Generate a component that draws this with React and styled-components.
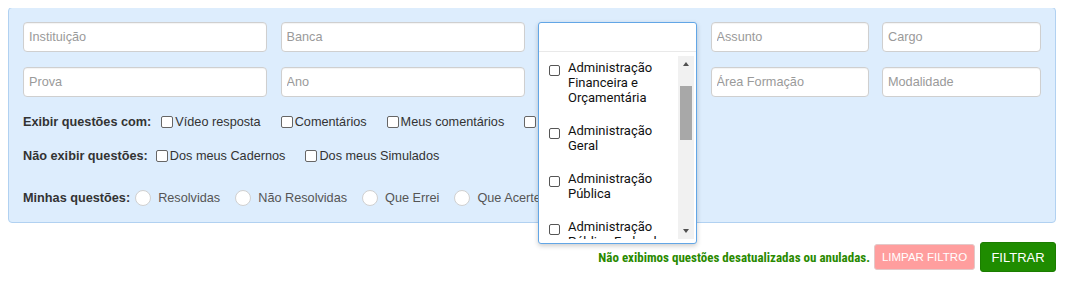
import React from "react";
import styled, { createGlobalStyle } from "styled-components";

const GlobalStyle = createGlobalStyle`
  body {
    margin: 8px;
    background: #ffffff;
    font-family: "Liberation Sans", Arial, sans-serif;
  }
`;

const topFields = ["Instituição", "Banca"];
const sideFields = ["Assunto", "Cargo"];
const bottomFields = ["Prova", "Ano"];
const bottomSideFields = ["Área Formação", "Modalidade"];

const exibirCom = ["Vídeo resposta", "Comentários", "Meus comentários", "Minhas anotações"];
const naoExibir = ["Dos meus Cadernos", "Dos meus Simulados"];
const minhas = ["Resolvidas", "Não Resolvidas", "Que Errei", "Que Acertei"];

const disciplinas = [
  "Administração Financeira e Orçamentária",
  "Administração Geral",
  "Administração Pública",
  "Administração Pública Federal",
];

function App() {
  return (
    <>
      <GlobalStyle />
      <Panel>
        <FieldGrid>
          {topFields.map((f) => (
            <TextInput key={f} placeholder={f} />
          ))}
          <DropCell>
            <Dropdown>
              <DropHeader />
              <DropBody>
                <DropList>
                  {disciplinas.map((d) => (
                    <DropItem key={d}>
                      <SmallBox type="checkbox" />
                      <DropText>{d}</DropText>
                    </DropItem>
                  ))}
                </DropList>
                <ScrollBar>
                  <ScrollArrow>
                    <ArrowUp />
                  </ScrollArrow>
                  <ScrollTrack>
                    <ScrollThumb />
                  </ScrollTrack>
                  <ScrollArrow>
                    <ArrowDown />
                  </ScrollArrow>
                </ScrollBar>
              </DropBody>
            </Dropdown>
          </DropCell>
          {sideFields.map((f) => (
            <TextInput key={f} placeholder={f} />
          ))}
          {bottomFields.map((f) => (
            <TextInput key={f} placeholder={f} />
          ))}
          {bottomSideFields.map((f) => (
            <TextInput key={f} placeholder={f} />
          ))}
        </FieldGrid>

        <OptionRow $top={15}>
          <RowLabel>Exibir questões com:</RowLabel>
          <Options $first={10}>
            {exibirCom.map((o) => (
              <Check key={o}>
                <Box type="checkbox" />
                {o}
              </Check>
            ))}
          </Options>
        </OptionRow>

        <OptionRow $top={14}>
          <RowLabel>Não exibir questões:</RowLabel>
          <Options $first={8}>
            {naoExibir.map((o) => (
              <Check key={o}>
                <Box type="checkbox" />
                {o}
              </Check>
            ))}
          </Options>
        </OptionRow>

        <OptionRow $top={22}>
          <RowLabel>Minhas questões:</RowLabel>
          <Options $first={5} $gap={15}>
            {minhas.map((o) => (
              <Radio key={o}>
                <Circle type="radio" name="minhas" />
                {o}
              </Radio>
            ))}
          </Options>
        </OptionRow>
      </Panel>

      <Footer>
        <Note>Não exibimos questões desatualizadas ou anuladas.</Note>
        <ClearButton>LIMPAR FILTRO</ClearButton>
        <FilterButton>FILTRAR</FilterButton>
      </Footer>
    </>
  );
}

export default App;

const Panel = styled.div`
  width: 1048px;
  box-sizing: border-box;
  margin-top: -1px;
  background: #ddedfd;
  border: 1px solid #b1d1f1;
  border-radius: 4px;
  padding: 14px 14px 14px 14px;
`;

const FieldGrid = styled.div`
  display: grid;
  grid-template-columns: 244px 244px 159px 158px 159px;
  grid-auto-rows: 30px;
  column-gap: 13.5px;
  row-gap: 15px;
`;

const TextInput = styled.input`
  box-sizing: border-box;
  width: 100%;
  height: 30px;
  border: 1px solid #cfcfcf;
  border-radius: 4px;
  background: #ffffff;
  padding: 0 5px;
  font-family: "Liberation Sans", Arial, sans-serif;
  font-size: 12.7px;
  color: #555;
  box-shadow: inset 0 1px 1px rgba(0, 0, 0, 0.05);
  outline: none;

  &::placeholder {
    color: #9a9a9a;
  }
`;

const DropCell = styled.div`
  grid-row: span 2;
  position: relative;
`;

const Dropdown = styled.div`
  position: absolute;
  top: 0;
  left: 0;
  right: 0;
  height: 222px;
  box-sizing: border-box;
  z-index: 10;
  display: flex;
  flex-direction: column;
  background: #ffffff;
  border: 1px solid #62a6e6;
  border-radius: 3px;
  box-shadow: 0 2px 5px rgba(0, 0, 0, 0.2);
`;

const DropHeader = styled.div`
  height: 28px;
  flex: none;
  border-bottom: 1px solid #e9e9e9;
`;

const DropBody = styled.div`
  flex: 1;
  min-height: 0;
  display: flex;
  padding: 4px 2px 4px 0;
`;

const DropList = styled.div`
  flex: 1;
  overflow: hidden;
  padding: 4px 0 0 10px;
  display: flex;
  flex-direction: column;
  gap: 18px;
`;

const DropItem = styled.label`
  display: flex;
  align-items: flex-start;
  gap: 8px;
  font-family: Roboto, "Liberation Sans", sans-serif;
  font-size: 13px;
  line-height: 15px;
  color: #111;
`;

const SmallBox = styled.input`
  appearance: none;
  flex: none;
  width: 11px;
  height: 11px;
  margin: 5px 0 0 0;
  border: 1px solid #555;
  border-radius: 2px;
  background: #fff;
`;

const DropText = styled.span`
  width: 100px;
`;

const ScrollBar = styled.div`
  flex: none;
  width: 16px;
  background: #f1f1f1;
  display: flex;
  flex-direction: column;
`;

const ScrollArrow = styled.div`
  height: 16px;
  display: flex;
  align-items: center;
  justify-content: center;
`;

const ArrowUp = styled.span`
  width: 0;
  height: 0;
  border-left: 3.5px solid transparent;
  border-right: 3.5px solid transparent;
  border-bottom: 4px solid #505050;
`;

const ArrowDown = styled.span`
  width: 0;
  height: 0;
  border-left: 3.5px solid transparent;
  border-right: 3.5px solid transparent;
  border-top: 4px solid #505050;
`;

const ScrollTrack = styled.div`
  flex: 1;
  padding: 14px 2px 0;
`;

const ScrollThumb = styled.div`
  height: 54px;
  background: #a8a8a8;
`;

const OptionRow = styled.div`
  display: flex;
  align-items: center;
  height: 20px;
  margin-top: ${(p) => p.$top}px;
`;

const RowLabel = styled.span`
  font-size: 12.7px;
  font-weight: bold;
  color: #333;
  white-space: nowrap;
`;

const Options = styled.div`
  display: flex;
  align-items: center;
  gap: ${(p) => p.$gap || 20}px;
  margin-left: ${(p) => p.$first}px;
`;

const Check = styled.label`
  display: flex;
  align-items: center;
  gap: 2px;
  font-size: 12.7px;
  color: #333;
  white-space: nowrap;
`;

const Box = styled.input`
  appearance: none;
  width: 12px;
  height: 12px;
  margin: 0;
  border: 1px solid #666;
  border-radius: 2px;
  background: #fff;
`;

const Radio = styled.label`
  display: flex;
  align-items: center;
  gap: 7px;
  font-size: 12.7px;
  color: #555;
  white-space: nowrap;
`;

const Circle = styled.input`
  appearance: none;
  width: 16px;
  height: 16px;
  margin: 0;
  border: 1px solid #d0d0d0;
  border-radius: 50%;
  background: #fff;
`;

const Footer = styled.div`
  width: 1048px;
  display: flex;
  justify-content: flex-end;
  align-items: center;
  gap: 5px;
  margin-top: 19px;
`;

const Note = styled.span`
  font-family: "Roboto Condensed", "Liberation Sans Narrow", Roboto, sans-serif;
  font-stretch: condensed;
  font-weight: bold;
  font-size: 13px;
  color: #2a8a00;
  margin-right: -1px;
`;

const ClearButton = styled.button`
  width: 101px;
  height: 26px;
  padding: 0;
  background: #ff9e9e;
  border: 1px solid #e3c9c9;
  border-radius: 3px;
  color: #ffffff;
  font-family: "Liberation Sans", Arial, sans-serif;
  font-size: 11.5px;
`;

const FilterButton = styled.button`
  width: 76px;
  height: 30px;
  padding: 0;
  background: #1f8c00;
  border: 1px solid #1b7d00;
  border-radius: 3px;
  color: #ffffff;
  font-family: "Liberation Sans", Arial, sans-serif;
  font-size: 13px;
`;
